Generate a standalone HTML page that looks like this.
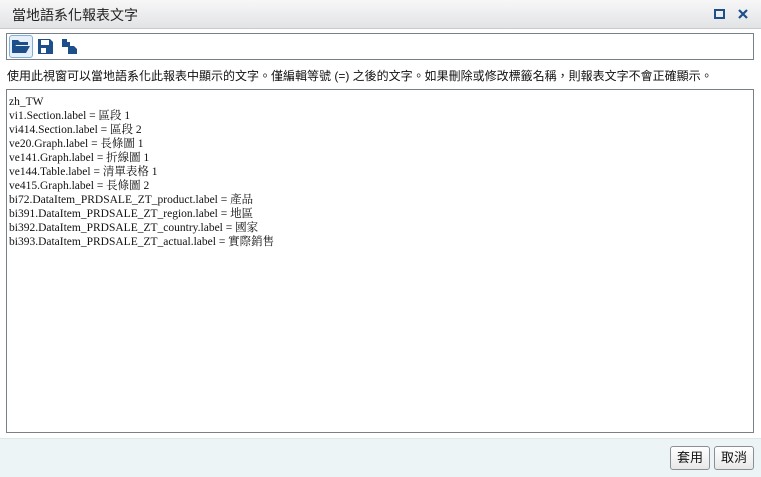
<!DOCTYPE html><html><head><meta charset="utf-8"><style>
body{margin:0;width:761px;height:476px;overflow:hidden;background:#fff;font-family:"Liberation Sans","Noto Sans CJK TC",sans-serif;position:relative}
.title{position:absolute;left:0;top:0;width:761px;height:28px;background:linear-gradient(#f7f7f8,#e2e3e5);border-bottom:1px solid #c8cacd}
.title span{position:absolute;left:12px;top:5px;font-size:14px;color:#222}
.tb{position:absolute;left:6px;top:33px;width:746px;height:25px;border:1px solid #7a8088;background:#fff}
.desc{position:absolute;left:7px;top:67px;font-size:12px;color:#111;white-space:nowrap}
.ta{position:absolute;left:6px;top:89px;width:746px;height:342px;border:1px solid #7a8088;background:#fff}
.ta pre{margin:0;padding:5px 2px;font-family:"Liberation Serif","Noto Serif CJK SC",serif;font-size:11.5px;line-height:14px;color:#111}
.foot{position:absolute;left:0;top:438px;width:761px;height:38px;background:#edf4f5;border-top:1px solid #dde7e9}
.btn{position:absolute;top:446px;height:22px;border:1px solid #8a8f96;border-radius:3px;background:linear-gradient(#fff,#e8e8e8);font-size:13px;line-height:22px;text-align:center;color:#111}
</style></head><body>
<div class="title"><span>當地語系化報表文字</span>
<svg style="position:absolute;left:714px;top:9px" width="11" height="10"><rect x="1" y="1" width="9" height="8" fill="none" stroke="#1d4f8a" stroke-width="2"/></svg>
<svg style="position:absolute;left:738px;top:9px" width="10" height="10"><path d="M1 1L9 9M9 1L1 9" stroke="#1d4f8a" stroke-width="2.2"/></svg>
</div>
<div class="tb">
<div style="position:absolute;left:2px;top:1px;width:22px;height:21px;border:1px solid #7fb0dc;border-radius:3px;background:#e6f0f8"></div>
<svg style="position:absolute;left:4px;top:4px" width="20" height="17"><path d="M1 2h6l2 2h8v3H5L1 15z" fill="#1d4f8a"/><path d="M4 8h15l-4 7H1z" fill="#1d4f8a"/></svg>
<svg style="position:absolute;left:30px;top:4px" width="17" height="17"><path d="M1 1h12l3 3v12H1z" fill="#1d4f8a"/><rect x="4" y="2" width="8" height="5" fill="#fff"/><rect x="4" y="10" width="5" height="5" fill="#fff"/></svg>
<svg style="position:absolute;left:54px;top:4px" width="17" height="17"><path d="M1 1h5v3h3v5H1z" fill="#1d4f8a"/><path d="M7 8h6l3 3v5H7z" fill="#1d4f8a"/></svg>
</div>
<div class="desc">使用此視窗可以當地語系化此報表中顯示的文字。僅編輯等號 (=) 之後的文字。如果刪除或修改標籤名稱，則報表文字不會正確顯示。</div>
<div class="ta"><pre>zh_TW
vi1.Section.label = 區段 1
vi414.Section.label = 區段 2
ve20.Graph.label = 長條圖 1
ve141.Graph.label = 折線圖 1
ve144.Table.label = 清單表格 1
ve415.Graph.label = 長條圖 2
bi72.DataItem_PRDSALE_ZT_product.label = 產品
bi391.DataItem_PRDSALE_ZT_region.label = 地區
bi392.DataItem_PRDSALE_ZT_country.label = 國家
bi393.DataItem_PRDSALE_ZT_actual.label = 實際銷售</pre></div>
<div class="foot"></div>
<div class="btn" style="left:670px;width:38px">套用</div>
<div class="btn" style="left:714px;width:38px">取消</div>
</body></html>
